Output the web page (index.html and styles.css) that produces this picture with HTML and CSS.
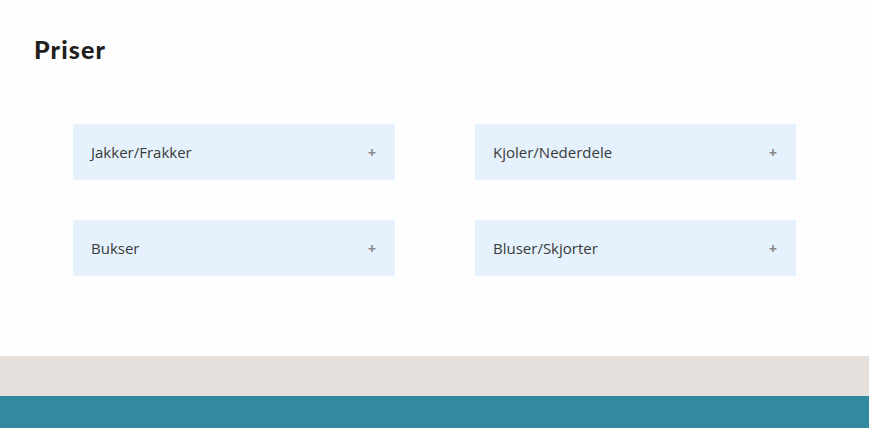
FILE: index.html
```html
<!DOCTYPE html>
<html lang="no">
<head>
<meta charset="utf-8">
<title>Priser</title>
<link rel="stylesheet" href="styles.css">
</head>
<body>
<main class="prices">
  <h1 class="title">Priser</h1>
  <div class="grid">
    <div class="item"><span>Jakker/Frakker</span><span class="plus">+</span></div>
    <div class="item"><span>Kjoler/Nederdele</span><span class="plus">+</span></div>
    <div class="item"><span>Bukser</span><span class="plus">+</span></div>
    <div class="item"><span>Bluser/Skjorter</span><span class="plus">+</span></div>
  </div>
</main>
<div class="band"></div>
<footer class="footer"></footer>
</body>
</html>
```
FILE: styles.css
```css
html, body { margin: 0; padding: 0; }
body {
  background: #fefefe;
  font-family: "Open Sans", "Liberation Sans", sans-serif;
  width: 869px;
}
.prices {
  height: 356px;
  box-sizing: border-box;
  padding-top: 34px;
}
.title {
  margin: 0 0 0 34px;
  font-family: "Lato", "Noto Sans", sans-serif;
  font-weight: 900;
  font-size: 25px;
  line-height: 30px;
  color: #231f20;
  letter-spacing: 1.1px;
}
.grid {
  width: 723px;
  margin: 60px auto 0;
  display: grid;
  grid-template-columns: 322px 321px;
  column-gap: 80px;
  row-gap: 40px;
}
.item {
  height: 56px;
  background: #e5f2fd;
  display: flex;
  align-items: center;
  justify-content: space-between;
  padding: 0 19px 0 18px;
  box-sizing: border-box;
  font-size: 15px;
  color: #3a3a3a;
}
.plus {
  color: #888;
  font-size: 14px;
  font-weight: 700;
}
.band { height: 40px; background: #e6e0dc; }
.footer { height: 32px; background: #3289a0; }
```
